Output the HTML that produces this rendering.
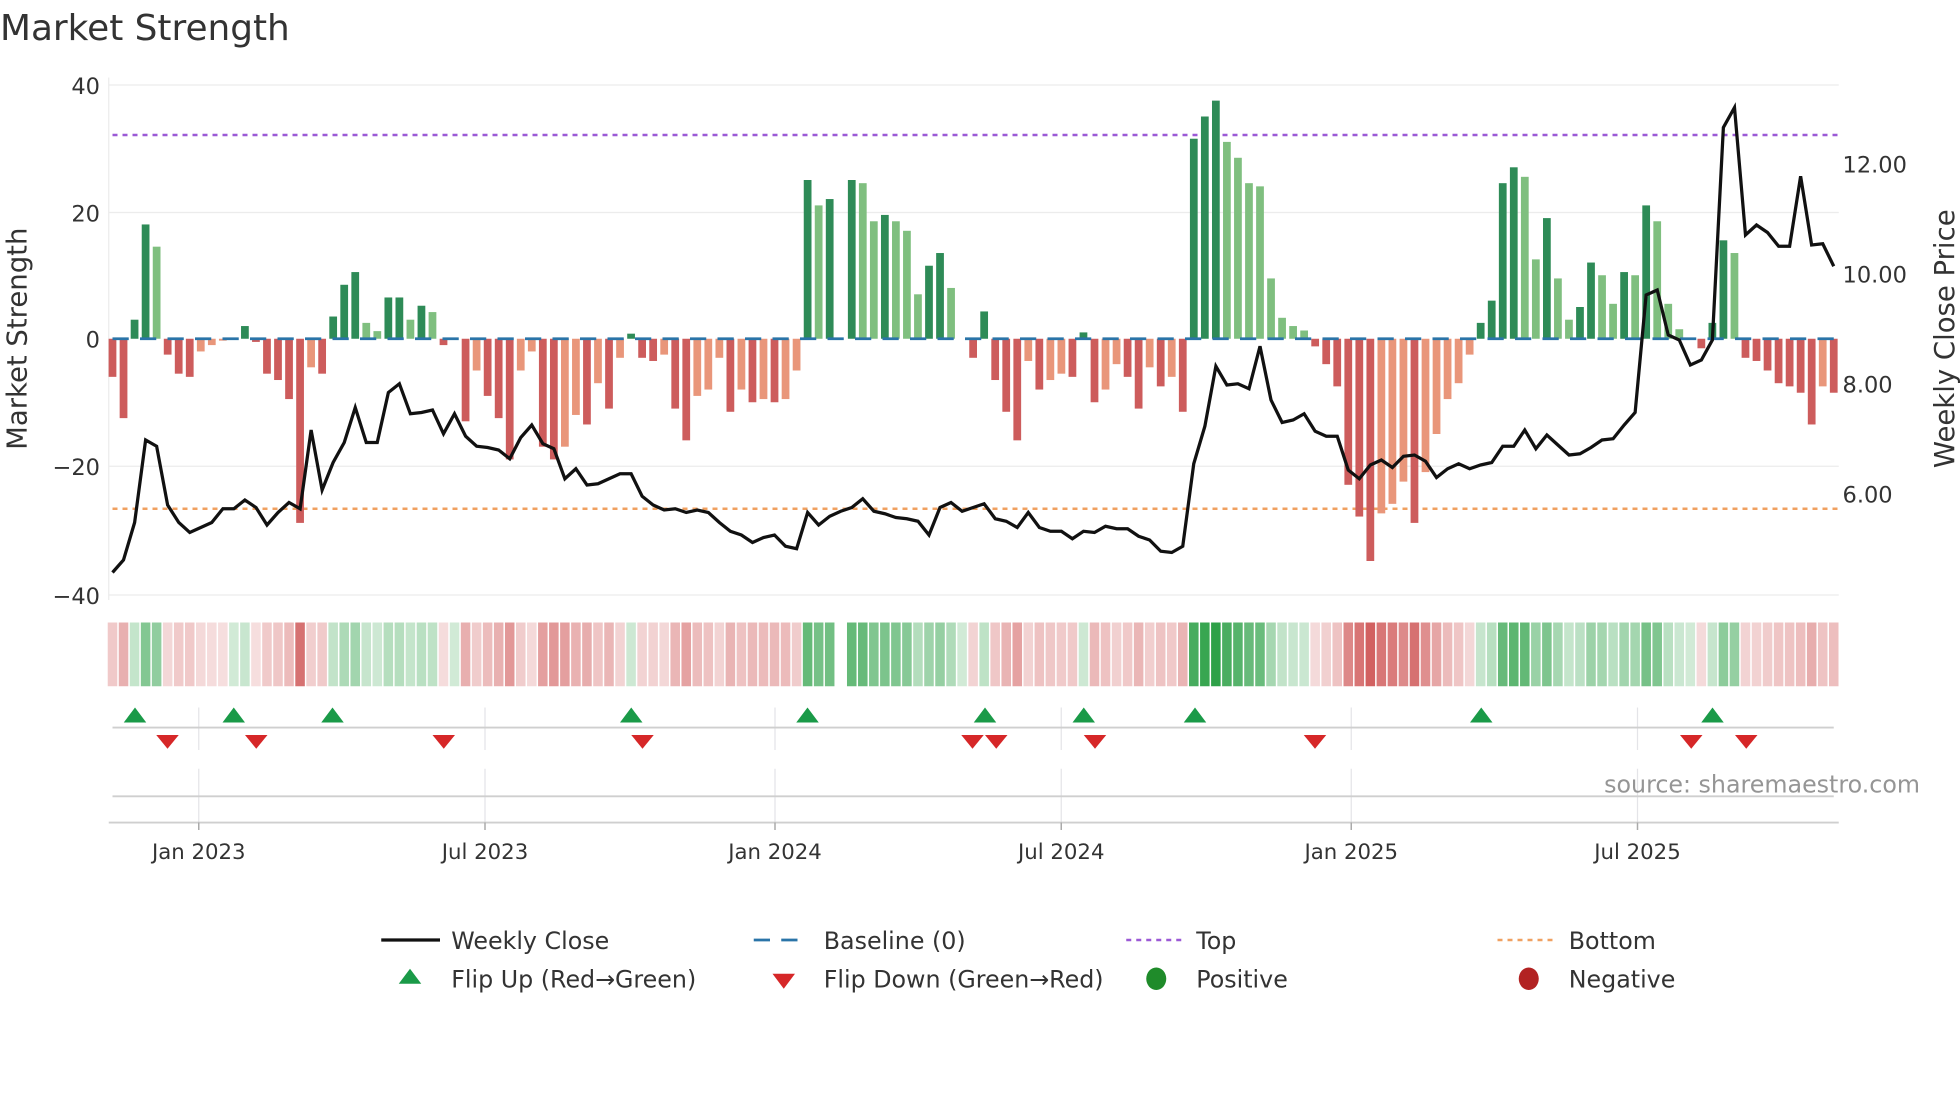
<!DOCTYPE html>
<html><head><meta charset="utf-8"><style>
html,body{margin:0;padding:0;background:#fff;width:1960px;height:1102px;overflow:hidden}
svg text{font-family:"DejaVu Sans","Liberation Sans",sans-serif;fill:#333}
</style></head><body>
<svg id="s" width="1960" height="1102" viewBox="0 0 1568 881.6" xmlns="http://www.w3.org/2000/svg">
<text x="0" y="32" font-size="28.7">Market Strength</text>
<g stroke="#ececec" stroke-width="1">
<line x1="87" y1="68" x2="1471" y2="68"/><line x1="87" y1="170" x2="1471" y2="170"/>
<line x1="87" y1="373" x2="1471" y2="373"/><line x1="87" y1="476" x2="1471" y2="476"/>
<line x1="87" y1="62" x2="87" y2="480"/>
</g>
<g font-size="18" text-anchor="end">
<text x="80" y="75">40</text><text x="80" y="177">20</text><text x="80" y="278">0</text>
<text x="80" y="380">−20</text><text x="80" y="483">−40</text>
</g>
<g font-size="18">
<text x="1474" y="138">12.00</text><text x="1474" y="226">10.00</text>
<text x="1474" y="314">8.00</text><text x="1474" y="402">6.00</text>
</g>
<text font-size="22" transform="translate(21,271) rotate(-90)" text-anchor="middle">Market Strength</text>
<text font-size="22" transform="translate(1563,271) rotate(-90)" text-anchor="middle">Weekly Close Price</text>
<line x1="90" y1="108" x2="1470" y2="108" stroke="#9b59d6" stroke-width="2" stroke-dasharray="4,4"/>
<line x1="90" y1="407" x2="1470" y2="407" stroke="#f0a060" stroke-width="2" stroke-dasharray="4,4"/>
<g id="bars"></g>
<line x1="90" y1="271" x2="1470" y2="271" stroke="#2a74a8" stroke-width="2.2" stroke-dasharray="13,9"/>
<polyline id="pl" fill="none" stroke="#111" stroke-width="2.6" stroke-linejoin="miter"/>
<g id="heat"></g>
<g stroke="#e4e4e8" stroke-width="1">
<line x1="159" y1="566" x2="159" y2="600"/><line x1="388" y1="566" x2="388" y2="600"/>
<line x1="620" y1="566" x2="620" y2="600"/><line x1="849" y1="566" x2="849" y2="600"/>
<line x1="1081" y1="566" x2="1081" y2="600"/><line x1="1310" y1="566" x2="1310" y2="600"/>
<line x1="159" y1="615" x2="159" y2="658"/><line x1="388" y1="615" x2="388" y2="658"/>
<line x1="620" y1="615" x2="620" y2="658"/><line x1="849" y1="615" x2="849" y2="658"/>
<line x1="1081" y1="615" x2="1081" y2="658"/><line x1="1310" y1="615" x2="1310" y2="658"/>
</g>
<line x1="90" y1="582" x2="1467" y2="582" stroke="#cfcfcf" stroke-width="1.5"/>
<line x1="90" y1="637" x2="1467" y2="637" stroke="#cfcfcf" stroke-width="1.5"/>
<line x1="87" y1="658" x2="1471" y2="658" stroke="#cfcfcf" stroke-width="1.5"/>
<g stroke="#aaa" stroke-width="1.2">
<line x1="159" y1="658" x2="159" y2="664"/><line x1="388" y1="658" x2="388" y2="664"/>
<line x1="620" y1="658" x2="620" y2="664"/><line x1="849" y1="658" x2="849" y2="664"/>
<line x1="1081" y1="658" x2="1081" y2="664"/><line x1="1310" y1="658" x2="1310" y2="664"/>
</g>
<g id="flips"></g>
<g font-size="17" text-anchor="middle">
<text x="159" y="687">Jan 2023</text><text x="388" y="687">Jul 2023</text>
<text x="620" y="687">Jan 2024</text><text x="849" y="687">Jul 2024</text>
<text x="1081" y="687">Jan 2025</text><text x="1310" y="687">Jul 2025</text>
</g>
<text x="1536" y="634" font-size="19" text-anchor="end" style="fill:#959595">source: sharemaestro.com</text>
<g font-size="19">
<line x1="305" y1="752" x2="352" y2="752" stroke="#111" stroke-width="2.6"/>
<text x="361" y="759">Weekly Close</text>
<line x1="603" y1="752" x2="647" y2="752" stroke="#2a74a8" stroke-width="2.2" stroke-dasharray="13,9"/>
<text x="659" y="759">Baseline (0)</text>
<line x1="901" y1="752" x2="945" y2="752" stroke="#9b59d6" stroke-width="2" stroke-dasharray="4,4"/>
<text x="957" y="759">Top</text>
<line x1="1198" y1="752" x2="1243" y2="752" stroke="#f0a060" stroke-width="2" stroke-dasharray="4,4"/>
<text x="1255" y="759">Bottom</text>
<polygon points="328,775 319,787 337,787" fill="#1a9a48"/>
<text x="361" y="790">Flip Up (Red→Green)</text>
<polygon points="618,779 636,779 627,791" fill="#d62728"/>
<text x="659" y="790">Flip Down (Green→Red)</text>
<ellipse cx="925" cy="783" rx="8" ry="9" fill="#1f8b2a"/>
<text x="957" y="790">Positive</text>
<ellipse cx="1223" cy="783" rx="8" ry="9" fill="#b22222"/>
<text x="1255" y="790">Negative</text>
</g>
</svg>
<script>
var NS="http://www.w3.org/2000/svg";
var b=[[-6,'R'],[-12.5,'R'],[3,'D'],[18,'D'],[14.5,'L'],[-2.5,'R'],[-5.5,'R'],[-6,'R'],[-2,'S'],[-1,'S'],[-0.3,'S'],[0,'R'],[2,'D'],[-0.5,'R'],[-5.5,'R'],[-6.5,'R'],[-9.5,'R'],[-29,'R'],[-4.5,'S'],[-5.5,'R'],
[3.5,'D'],[8.5,'D'],[10.5,'D'],[2.5,'L'],[1.2,'L'],[6.5,'D'],[6.5,'D'],[3,'L'],[5.2,'D'],[4.2,'L'],[-1,'R'],[0,'R'],[-13,'R'],[-5,'S'],[-9,'R'],[-12.5,'R'],[-19,'R'],[-5,'S'],[-2,'S'],[-17,'R'],
[-19,'R'],[-17,'S'],[-12,'S'],[-13.5,'R'],[-7,'S'],[-11,'R'],[-3,'S'],[0.8,'D'],[-3,'R'],[-3.5,'R'],[-2.5,'S'],[-11,'R'],[-16,'R'],[-9,'S'],[-8,'S'],[-3,'S'],[-11.5,'R'],[-8,'S'],[-10,'R'],[-9.5,'S'],
[-10,'R'],[-9.5,'S'],[-5,'S'],[25,'D'],[21,'L'],[22,'D'],[0,'D'],[25,'D'],[24.5,'L'],[18.5,'L'],[19.5,'D'],[18.5,'L'],[17,'L'],[7,'L'],[11.5,'D'],[13.5,'D'],[8,'L'],[0,'D'],[-3,'R'],[4.3,'D'],
[-6.5,'R'],[-11.5,'R'],[-16,'R'],[-3.5,'S'],[-8,'R'],[-6.5,'S'],[-5.5,'S'],[-6,'R'],[1,'D'],[-10,'R'],[-8,'S'],[-4,'S'],[-6,'R'],[-11,'R'],[-4.5,'S'],[-7.5,'R'],[-6,'S'],[-11.5,'R'],[31.5,'D'],[35,'D'],
[37.5,'D'],[31,'L'],[28.5,'L'],[24.5,'L'],[24,'L'],[9.5,'L'],[3.3,'L'],[2,'L'],[1.3,'L'],[-1.2,'R'],[-4,'R'],[-7.5,'R'],[-23,'R'],[-28,'R'],[-35,'R'],[-27.5,'S'],[-26,'S'],[-22.5,'S'],[-29,'R'],[-21,'S'],
[-15,'S'],[-9.5,'S'],[-7,'S'],[-2.5,'S'],[2.5,'D'],[6,'D'],[24.5,'D'],[27,'D'],[25.5,'L'],[12.5,'L'],[19,'D'],[9.5,'L'],[3,'L'],[5,'D'],[12,'D'],[10,'L'],[5.5,'L'],[10.5,'D'],[10,'L'],[21,'D'],
[18.5,'L'],[5.5,'L'],[1.5,'L'],[0,'R'],[-1.5,'R'],[2.5,'D'],[15.5,'D'],[13.5,'L'],[-3,'R'],[-3.5,'R'],[-5,'R'],[-7,'R'],[-7.5,'R'],[-8.5,'R'],[-13.5,'R'],[-7.5,'S'],[-8.5,'R']];
var py=[458,448,418,352,357,404,418,426,422,418,407,407,400,406,420,410,402,407,344,392,370,354,326,354,354,314,307,331,330,328,347,331,349,357,358,360,367,350,340,355,359,383,375,388,387,383,379,379,397,404,408,407,410,408,410,418,425,428,434,430,428,437,439,410,420,413,409,406,399,409,411,414,415,417,428,406,402,409,406,403,415,417,422,410,422,425,425,431,425,426,421,423,423,429,432,441,442,437,371,341,293,308,307,311,277,320,338,336,331,345,349,349,376,383,372,368,374,365,364,369,382,375,371,375,372,370,357,357,344,359,348,356,364,363,358,352,351,340,330,236,232,268,272,292,288,272,102,86,188,180,186,197,197,141,196,195,213];
var N=b.length, x0=90, dx=(1467-90)/(N-1);
var col={D:'#2e8b57',L:'#7fbf7f',R:'#cd5c5c',S:'#e9967a'};
var g=document.getElementById('bars'), h=document.getElementById('heat');
function el(t,a,p){var e=document.createElementNS(NS,t);for(var k in a)e.setAttribute(k,a[k]);p.appendChild(e);return e;}
for(var i=0;i<N;i++){
 var x=x0+i*dx,v=b[i][0],y0=271,y1=271-v*5.08;
 if(v!==0) el('rect',{x:x-3.1,y:Math.min(y0,y1),width:6.2,height:Math.abs(y1-y0),fill:col[b[i][1]]},g);
 if(i===66) continue;
 var a,c;
 if(v>=0){a=0.22+0.78*Math.min(v/38,1);c='44,160,70';}
 else{a=0.18+0.72*Math.min(-v/33,1);c='205,80,80';}
 el('rect',{x:x-dx/2+0.6,y:498,width:dx-1.2,height:51,fill:'rgba('+c+','+a.toFixed(2)+')'},h);
}
var pts=[];for(var i=0;i<py.length;i++)pts.push((x0+i*dx).toFixed(1)+','+py[i]);
document.getElementById('pl').setAttribute('points',pts.join(' '));
var f=document.getElementById('flips');
[108,187,266,505,646,788,867,956,1185,1370].forEach(function(x){el('polygon',{points:x+',566 '+(x-9)+',578 '+(x+9)+',578',fill:'#1a9a48'},f);});
[134,205,355,514,778,797,876,1052,1353,1397].forEach(function(x){el('polygon',{points:(x-9)+',588 '+(x+9)+',588 '+x+',599',fill:'#d62728'},f);});
</script>
</body></html>
